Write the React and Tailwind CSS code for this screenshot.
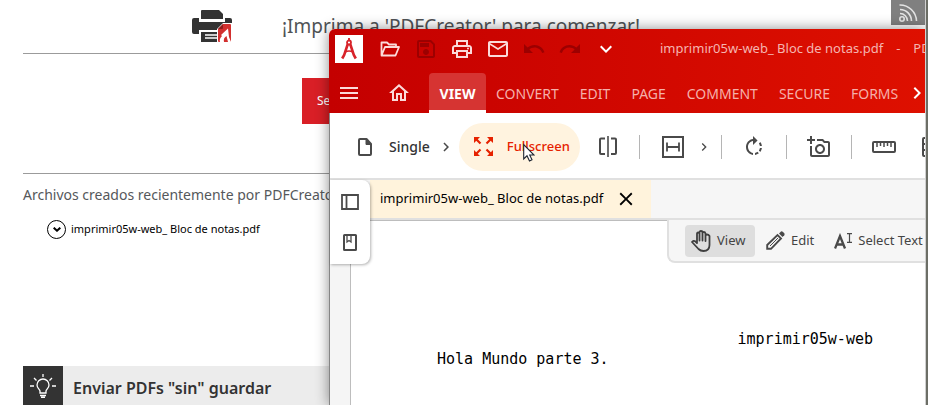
import React from "react";
import {
  MdOutlineSave,
  MdOutlinePrint,
  MdOutlineMailOutline,
  MdUndo,
  MdRedo,
  MdExpandMore,
  MdMenu,
  MdOutlineHome,
  MdRotateRight,
  MdOutlineAddAPhoto,
  MdChevronRight,
  MdClose,
} from "react-icons/md";

const FILE_NAME = "imprimir05w-web_ Bloc de notas.pdf";

function PrinterLogo() {
  return (
    <svg className="h-[33px] w-10 shrink-0" viewBox="0 0 40 33" aria-hidden="true">
      <path d="M10 0H27L31 4V9H9V1Q9 0 10 0Z" fill="#333" />
      <path d="M2 8H7V12H33V8H38Q40 8 40 10V22Q40 24 38 24H33V20H7V24H2Q0 24 0 22V10Q0 8 2 8Z" fill="#333" />
      <path d="M7 10.500H32" stroke="#fff" strokeWidth="1.2" />
      <path d="M9 22H28V32H9Z" fill="#333" />
      <path d="M13 25H27M13 28H27" stroke="#fff" strokeWidth="1.4" />
      <path d="M25 33V19L31 13H40V33Z" fill="#fff" />
      <path d="M26 19L31 14H38Q39 14 39 15V31Q39 32 38 32H27Q26 32 26 31Z" fill="#d2302f" />
      <path d="M26 19L31 14V18Q31 19 30 19Z" fill="#8d1c1c" />
      <path d="M28 32Q27 29 30 26L29 25L36 18.500L37 27L39 32H36L34.500 26Q31 28 32 32Z" fill="#fff" />
    </svg>
  );
}

function RssIcon() {
  return (
    <svg className="size-5" viewBox="0 0 20 20" fill="none" stroke="#e4e4e4" strokeWidth="1.6" aria-hidden="true">
      <circle cx="4" cy="16" r="2.2" />
      <path d="M2 10.500A7.500 7.500 0 0 1 9.500 18M2 6.500A11.500 11.500 0 0 1 13.500 18M1.500 2A16.500 16.500 0 0 1 18.500 18" />
    </svg>
  );
}

function BulbIcon() {
  return (
    <svg className="h-6 w-[26px]" viewBox="0 0 26 24" fill="none" stroke="#fff" strokeWidth="1.3" aria-hidden="true">
      <path d="M10 19V17C9.500 15 7 14 7 11A6 6 0 0 1 19 11C19 14 16.500 15 16 17V19ZM0 12H4M22 12H26M13 0V3M4 4L6.500 6.500M22 4L19.500 6.500" />
      <path d="M10 21.500H16M11 23.300H15" strokeWidth="1.6" />
    </svg>
  );
}

function ToggleChevron() {
  return (
    <svg className="h-[5px] w-2" viewBox="0 0 8 5" fill="none" stroke="#000" strokeWidth="2" aria-hidden="true">
      <path d="M0.700 0.700L4 3.700L7.300 0.700" />
    </svg>
  );
}

function CompassLogo() {
  return (
    <svg className="h-[22px] w-4" viewBox="0 0 16 22" fill="none" stroke="#d8232a" aria-hidden="true">
      <path d="M8 0V3" strokeWidth="1.8" />
      <circle cx="8" cy="4.500" r="2" strokeWidth="1.8" />
      <path d="M6.800 6L3.200 17L1.200 20.500M9.200 6L12.800 17L14.800 20.500" strokeWidth="2.600" />
      <path d="M4 14Q8 12 12 14" strokeWidth="1.600" />
    </svg>
  );
}

function FolderIcon() {
  return (
    <svg className="h-4 w-5" viewBox="0 0 20 16" fill="none" stroke="#fbdada" strokeWidth="1.800" strokeLinejoin="round" aria-hidden="true">
      <path d="M1.500 14V1.500H7L9 3.500H16V6M1.500 14.500L5 6H19L15.500 14.500Z" />
    </svg>
  );
}

function PageIcon() {
  return (
    <svg className="h-[18px] w-[14px]" viewBox="0 0 14 18" fill="none" stroke="#4a4a4a" strokeWidth="2" strokeLinejoin="round" aria-hidden="true">
      <path d="M1 2Q1 1 2 1H8.500L13 6V16Q13 17 12 17H2Q1 17 1 16Z" />
      <path d="M8 1L13 6.500H8Z" fill="#4a4a4a" strokeWidth="1" />
    </svg>
  );
}

function FullscreenIcon() {
  return (
    <svg className="size-[19px]" viewBox="0 0 19 19" fill="#e62200" stroke="#e62200" strokeWidth="2.200" aria-hidden="true">
      <path d="M2 2L6.500 6.500M17 2L12.500 6.500M2 17L6.500 12.500M17 17L12.500 12.500" />
      <path d="M0 0H6L0 6ZM19 0H13L19 6ZM0 19H6L0 13ZM19 19H13L19 13Z" stroke="none" />
    </svg>
  );
}

function SplitIcon() {
  return (
    <svg className="h-[21px] w-[18px]" viewBox="0 0 18 21" fill="none" stroke="#4a4a4a" strokeWidth="2" aria-hidden="true">
      <path d="M6 2.500H2Q1 2.500 1 3.500V17Q1 18 2 18H6M12 2.500H16Q17 2.500 17 3.500V17Q17 18 16 18H12" />
      <path d="M9 0V21" strokeWidth="1.600" />
    </svg>
  );
}

function FitWidthIcon() {
  return (
    <svg className="size-[22px]" viewBox="0 0 22 22" fill="none" stroke="#4a4a4a" strokeWidth="2" aria-hidden="true">
      <path d="M1 1H21V21H1Z" />
      <path d="M5 6.500V15.500M17 6.500V15.500M5 11H17" strokeWidth="1.800" />
    </svg>
  );
}

function RulerIcon() {
  return (
    <svg className="h-3 w-6" viewBox="0 0 24 12" fill="none" stroke="#4a4a4a" aria-hidden="true">
      <rect x="1" y="1" width="22" height="10" rx="1" strokeWidth="2" />
      <path d="M5 1V6M8.500 1V5M12 1V6M15.500 1V5M19 1V6" strokeWidth="1.500" />
    </svg>
  );
}

function TableIcon() {
  return (
    <svg className="h-5 w-5 shrink-0" viewBox="0 0 20 20" fill="none" stroke="#4a4a4a" strokeWidth="2" aria-hidden="true">
      <rect x="1" y="1" width="18" height="18" rx="1" />
      <path d="M1 7H19M1 13H19" />
    </svg>
  );
}

function PanelIcon() {
  return (
    <svg className="h-4 w-[18px]" viewBox="0 0 18 16" fill="none" stroke="#4a4a4a" strokeWidth="1.800" aria-hidden="true">
      <path d="M1 1H17V15H1ZM5.500 1V15" />
    </svg>
  );
}

function BookmarkIcon() {
  return (
    <svg className="h-[17px] w-[14px]" viewBox="0 0 14 17" fill="none" stroke="#4a4a4a" aria-hidden="true">
      <rect x="1" y="1" width="12" height="15" rx="0.500" strokeWidth="2" />
      <path d="M4 1V8L6 6.500L8 8V1" strokeWidth="1.300" />
    </svg>
  );
}

function HandIcon() {
  return (
    <svg className="h-[22px] w-5" viewBox="0 0 20 22" fill="none" stroke="#3f3f3f" strokeWidth="1.800" strokeLinejoin="round" strokeLinecap="round" aria-hidden="true">
      <path d="M6 13V4Q6 2.500 7.200 2.500T8.500 4V10.500V2.500Q8.500 1 10 1T11.500 2.500V10.500V3Q11.500 2 12.800 2T14.500 3.500V11V6Q14.500 4.500 16 4.500T18.500 6V15Q18.500 21 12.500 21Q9.500 21 7.500 19L1 12Q2.500 10 4.500 11.500L6 13Z" />
    </svg>
  );
}

function PencilIcon() {
  return (
    <svg className="size-[19px]" viewBox="0 0 19 19" aria-hidden="true">
      <path d="M1.200 17.800V14L11.500 4L15 7.500L5 17.800Z" fill="none" stroke="#4a4a4a" strokeWidth="1.900" />
      <path d="M4 15L12 7" stroke="#4a4a4a" strokeWidth="1" />
      <path d="M13 2.500L15 0.500Q16 0 17 1L18.300 2.300Q19 3.300 18.300 4.200L16.500 6Z" fill="#4a4a4a" />
    </svg>
  );
}

function SelectTextIcon() {
  return (
    <svg className="h-4 w-[18px]" viewBox="0 0 18 16" fill="none" stroke="#4a4a4a" aria-hidden="true">
      <path d="M1 15.500L6 3L11 15.500M3 11.500H9.500" strokeWidth="2.300" />
      <path d="M13 0.700H18M13 9.300H18M15.500 0.700V9.300" strokeWidth="1.200" />
    </svg>
  );
}

function Pointer() {
  return (
    <svg className="absolute top-[114px] left-[194px] h-[19px] w-3" viewBox="0 0 12 19" fill="#fff" stroke="#1c2430" strokeWidth="1.100" aria-hidden="true">
      <path d="M0.700 1.500V16L4 12.800L6.500 18L9 16.800L6.700 12H11Z" />
    </svg>
  );
}

function Divider() {
  return <div className="h-6 w-px shrink-0 bg-[#b5b5b5]" />;
}

function CreatorPage() {
  return (
    <main className="pl-[23px]">
      <header className="flex h-[54px] items-center gap-[50px] border-b border-[#9b9b9b] pl-[169px]">
        <PrinterLogo />
        <h1 className="text-[19px] text-[#505356]">¡Imprima a 'PDFCreator' para comenzar!</h1>
      </header>
      <section className="flex h-[120px] items-start border-b border-[#9b9b9b] pt-6 pl-[279px]">
        <button className="h-[46px] bg-[#d91f26] px-[15px] text-[12px] text-white">Seleccionar archivo</button>
      </section>
      <section className="h-48 pt-[9px]">
        <h2 className="text-[14px] leading-6 text-[#55585b]">Archivos creados recientemente por PDFCreator</h2>
        <div className="flex items-center gap-[5px] pt-3 pl-6">
          <button aria-label="Opciones" className="flex size-[19px] items-center justify-center rounded-full border border-black">
            <ToggleChevron />
          </button>
          <a href="#archivo" className="text-[11px] leading-5 text-black">{FILE_NAME}</a>
        </div>
      </section>
      <section className="flex h-10 items-center bg-[#ececec]">
        <div className="flex size-10 items-center justify-center bg-[#333]">
          <BulbIcon />
        </div>
        <h2 className="pt-1 pl-[10px] text-[16px] font-semibold text-[#333]">Enviar PDFs "sin" guardar</h2>
      </section>
    </main>
  );
}

function TitleBar() {
  return (
    <div className="flex h-10 items-center pl-[5px]">
      <div className="flex size-7 items-center justify-center bg-white">
        <CompassLogo />
      </div>
      <div className="flex items-center gap-3 pl-[15px] text-[#fbdada]">
        <button aria-label="Open" className="flex size-6 items-center justify-center"><FolderIcon /></button>
        <button aria-label="Save" disabled className="text-[#9c0000]"><MdOutlineSave size={24} /></button>
        <button aria-label="Print"><MdOutlinePrint size={24} /></button>
        <button aria-label="Mail"><MdOutlineMailOutline size={24} /></button>
        <button aria-label="Undo" disabled className="text-[#9c0000]"><MdUndo size={24} /></button>
        <button aria-label="Redo" disabled className="text-[#9c0000]"><MdRedo size={24} /></button>
        <button aria-label="More" className="text-white"><MdExpandMore size={24} /></button>
      </div>
      <div className="flex min-w-0 flex-1 gap-[13px] overflow-hidden pl-[42px] text-[13px] whitespace-nowrap text-[#f5b5b0]">
        <span>{FILE_NAME}</span>
        <span>-</span>
        <span>PDF Architect</span>
      </div>
    </div>
  );
}

function MenuBar() {
  const tabs = ["CONVERT", "EDIT", "PAGE", "COMMENT", "SECURE", "FORMS"];
  return (
    <div className="flex h-10 items-center pl-[7px]">
      <button aria-label="Menu" className="text-[#fbdada]"><MdMenu size={24} /></button>
      <button aria-label="Home" className="ml-[26px] text-[#fbdada]"><MdOutlineHome size={24} /></button>
      <nav className="ml-[18px] flex h-10 flex-1 items-center gap-[10px] overflow-hidden">
        <button className="h-10 w-[57px] shrink-0 rounded-t border-b-[3px] border-white bg-[#d63432] pt-[3px] text-[14px] font-bold text-white">VIEW</button>
        <div className="flex gap-[21px]">
          {tabs.map((t) => (
            <button key={t} className="shrink-0 text-[14px] text-[#f5b0aa]">{t}</button>
          ))}
        </div>
      </nav>
      <button aria-label="More tabs" className="ml-[6px] -mr-1 text-white"><MdChevronRight size={24} /></button>
    </div>
  );
}

function Ribbon() {
  return (
    <div className="flex h-[67px] items-center border-b-2 border-[#e0e0e0] bg-white pt-[2px] pl-7 text-[#4a4a4a]">
      <button className="flex shrink-0 items-center gap-[17px] text-[14px] font-medium text-[#333]">
        <PageIcon />
        Single
      </button>
      <MdChevronRight className="ml-[7px] shrink-0" size={18} />
      <button className="ml-[4px] flex h-12 w-[121px] shrink-0 items-center gap-[14px] rounded-full bg-[#fff3df] pl-[15px] text-[13px] font-medium text-[#e62200]">
        <FullscreenIcon />
        Fullscreen
      </button>
      <div className="flex shrink-0 items-center gap-[22px] pl-[19px]">
        <button aria-label="Split"><SplitIcon /></button>
        <Divider />
        <div className="flex items-center gap-3">
          <button aria-label="Fit width"><FitWidthIcon /></button>
          <MdChevronRight size={16} />
        </div>
      </div>
      <div className="flex shrink-0 items-center gap-5 pl-[9px]">
        <Divider />
        <button aria-label="Rotate"><MdRotateRight size={24} /></button>
        <Divider />
        <button aria-label="Snapshot"><MdOutlineAddAPhoto size={24} /></button>
        <Divider />
      </div>
      <button aria-label="Measure" className="ml-5 shrink-0"><RulerIcon /></button>
      <button aria-label="Table" className="ml-[26px] shrink-0"><TableIcon /></button>
    </div>
  );
}

function ArchitectWindow() {
  return (
    <div className="absolute inset-y-0 top-[29px] right-[3px] left-[329px] rounded-tl-md shadow-[0_0_14px_rgba(0,0,0,0.45)]">
      <div className="flex h-full flex-col overflow-hidden rounded-tl-md bg-white">
        <header className="flex h-[84px] shrink-0 flex-col justify-between border-l border-[#c40000] bg-gradient-to-r from-[#c40000] to-[#de1000]">
          <TitleBar />
          <MenuBar />
        </header>
        <div className="flex min-h-0 flex-1 flex-col border-l border-[#858585]">
          <Ribbon />
          <div className="h-[40px] shrink-0 border-b-2 border-[#e0e0e0] bg-[#f6f6f6] pl-10">
            <div className="flex h-full w-[281px] items-center justify-between bg-[#fff3dc] pr-[14px] pl-[10px] text-[13px] text-black">
              <span>{FILE_NAME}</span>
              <button aria-label="Close tab"><MdClose size={22} /></button>
            </div>
          </div>
          <div className="flex min-h-0 flex-1 bg-[#f5f5f5] pl-5">
            <article className="flex flex-1 flex-col overflow-hidden border-t border-l border-[#bdbdbd] bg-white pt-[108px] pl-[86px] font-['DejaVu_Sans_Mono',monospace] text-[15px] leading-5 text-black">
              <p className="pr-[52px] text-right">imprimir05w-web</p>
              <p>Hola Mundo parte 3.</p>
            </article>
          </div>
        </div>
      </div>
      <aside className="absolute top-[151px] left-px flex w-10 flex-col items-center rounded-r-lg bg-white py-[6px] shadow-[1px_1px_3px_rgba(0,0,0,0.3)]">
        <button aria-label="Pages" className="flex h-8 items-center"><PanelIcon /></button>
        <button aria-label="Bookmarks" className="mt-2 flex h-8 items-center"><BookmarkIcon /></button>
      </aside>
      <div className="absolute top-[191px] right-0 flex h-[43px] w-[258px] items-center overflow-hidden rounded-bl-lg border-b-2 border-l-2 border-[#e0e0e0] bg-[#f6f6f6] pl-4 text-[13px] whitespace-nowrap text-[#444]">
        <button className="flex h-8 w-[70px] shrink-0 items-center gap-[6px] rounded bg-[#dedede] pl-[6px]"><HandIcon />View</button>
        <button className="flex shrink-0 items-center gap-[6px] pl-[11px]"><PencilIcon />Edit</button>
        <button className="flex shrink-0 items-center gap-[6px] pl-5"><SelectTextIcon />Select Text</button>
      </div>
      <Pointer />
    </div>
  );
}

export default function App() {
  return (
    <div className="relative h-screen overflow-hidden bg-white font-['Noto_Sans','Open_Sans',sans-serif]">
      <CreatorPage />
      <button aria-label="RSS" className="absolute top-0 right-[3px] flex h-[25px] w-[34px] items-center justify-center bg-[#808080]">
        <RssIcon />
      </button>
      <ArchitectWindow />
      <div className="absolute inset-y-0 right-0 w-[3px] border-l border-[#d0d0d0] bg-[#6c6e66]" />
    </div>
  );
}
